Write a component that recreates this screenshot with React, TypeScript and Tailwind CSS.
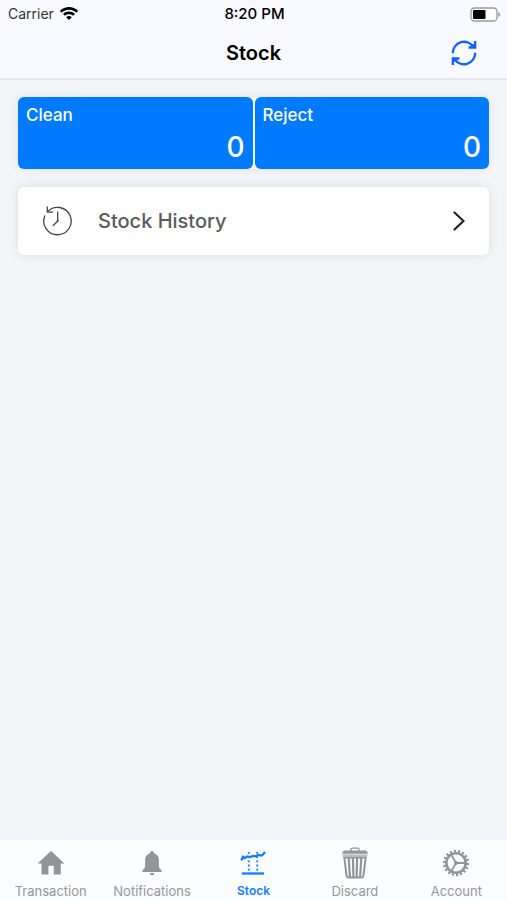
import type { ReactNode } from 'react';

const WifiIcon = () => (
  <svg className="h-[14px] w-[18px]" viewBox="0 0 18 14" fill="currentColor" aria-hidden="true">
    <path d="M9 0C5.600 0 2.500 1.300.200 3.500c-.2.200-.2.500 0 .7l1.200 1.200c.2.200.4.200.6 0C3.900 3.700 6.300 2.700 9 2.700s5.100 1 7 2.700c.2.200.4.200.6 0l1.200-1.200c.2-.2.2-.5 0-.7C15.500 1.300 12.400 0 9 0z" />
    <path d="M9 4.500c-2.200 0-4.200.8-5.700 2.200-.2.200-.2.400 0 .6l1.300 1.300c.2.200.4.200.6 0C6.200 7.700 7.500 7.200 9 7.200s2.800.5 3.800 1.400c.2.200.4.200.6 0l1.300-1.300c.2-.2.200-.4 0-.6C13.200 5.300 11.200 4.500 9 4.500z" />
    <path d="M9 9c-1 0-1.900.4-2.500 1-.2.200-.2.400 0 .6l2.200 2.200c.2.200.4.200.6 0l2.200-2.200c.2-.2.200-.4 0-.6C10.900 9.400 10 9 9 9z" />
  </svg>
);

const BatteryIcon = () => (
  <svg className="h-[15px] w-[31px]" viewBox="0 0 31 15" aria-hidden="true">
    <rect x="1" y="1" width="26" height="13" rx="3.500" fill="#fff" stroke="#9b9b9b" strokeWidth="1.300" />
    <rect x="3" y="3" width="12.500" height="9" rx="1" fill="#000" />
    <path d="M28.300 5v5c1-.5 1.900-1.400 1.900-2.500S29.300 5.500 28.300 5z" fill="#9b9b9b" />
  </svg>
);

const SyncIcon = () => (
  <svg className="h-[26px] w-[26px]" viewBox="0 0 26 26" fill="none" stroke="currentColor" strokeWidth="2.300" aria-hidden="true">
    <path d="M1.800 13.200A11.200 11.200 0 0 1 22.600 7.200" />
    <path d="M24.200 1V7.500H17.600M20 7.500 24.200 4.500" />
    <path d="M24.200 12.800A11.200 11.200 0 0 1 3.400 18.800" />
    <path d="M1.800 25V18.500H8.400M6 18.500 1.800 21.500" />
  </svg>
);

const HistoryIcon = () => (
  <svg className="h-[30px] w-[30px]" viewBox="0 0 30 30" fill="none" stroke="currentColor" strokeWidth="1.300" aria-hidden="true">
    <path d="M5.400 5.750A13.700 13.700 0 1 1 2.900 9.600" />
    <path d="M5.300.5v5.600h5.700" />
    <path d="M15.700 5.500v9.700l-4.800 4.500" />
    <circle cx="15.600" cy="15" r="1" fill="currentColor" stroke="none" />
  </svg>
);

const ChevronIcon = () => (
  <svg className="h-5 w-3" viewBox="0 0 12 20" fill="none" stroke="currentColor" strokeWidth="2.200" strokeLinecap="round" aria-hidden="true">
    <path d="M1.500 1.500 10.500 10l-9 8.500" />
  </svg>
);

const HomeIcon = () => (
  <svg className="h-8 w-8" viewBox="0 0 32 32" fill="currentColor" aria-hidden="true">
    <path d="M16 4 29.500 16.400H25.800V27.500H18.800V19.500c0-.4-.3-.7-.7-.7H14.100c-.4 0-.7.300-.7.700V27.500H6.500V16.400H2.500z" />
  </svg>
);

const BellIcon = () => (
  <svg className="h-8 w-8" viewBox="0 0 32 32" fill="currentColor" aria-hidden="true">
    <path d="M16 4c-1.100 0-1.900.8-1.900 1.700v.5C10.900 7 9.100 9.700 9.100 13v5.500c0 2.200-.8 3.300-2.700 4.700V25h19.200v-1.800c-1.900-1.400-2.700-2.500-2.700-4.700V13c0-3.300-1.800-6-5-6.800v-.5C17.900 4.800 17.100 4 16 4z" />
    <path d="M13.700 26h4.600c-.2 1.400-1 2.300-2.300 2.300s-2.100-.9-2.300-2.300z" />
  </svg>
);

const StockIcon = () => (
  <svg className="h-8 w-8" viewBox="0 0 32 32" fill="none" stroke="currentColor" strokeWidth="2.300" aria-hidden="true">
    <path d="M4.300 13.500 6 9.800l1.800 1.300 2.300-1.600 3 .6 3-1.200 2.700.4 2.700-1.300 2.700.6 1.700-.9L28 5" />
    <path d="M11.800 5v20M20.200 5v20" strokeDasharray="1.800 2.400" strokeWidth="1.800" />
    <path d="M4.900 26.500H27.100" />
  </svg>
);

const TrashIcon = () => (
  <svg className="h-8 w-8" viewBox="0 0 32 32" fill="none" stroke="currentColor" aria-hidden="true">
    <path d="M12 4V2.500c0-.8.500-1.300 1.300-1.300h5.400c.8 0 1.300.5 1.300 1.300V4" strokeWidth="1.300" />
    <path d="M6 3.600h20c1.700 0 2.800 1.300 2.800 3.200H3.200C3.200 4.900 4.300 3.600 6 3.600z" fill="currentColor" stroke="none" />
    <path d="M3.500 8.400h25" strokeWidth="2" opacity=".6" />
    <path d="M5.300 10.500 7.600 29c.1.900.7 1.400 1.600 1.400h13.600c.9 0 1.500-.5 1.600-1.400l2.300-18.500z" strokeWidth="2" />
    <path d="M9.700 11l1.200 19M13.900 11l.5 19M18.100 11l-.5 19M22.300 11l-1.200 19" strokeWidth="2.200" />
  </svg>
);

const GearIcon = () => (
  <svg className="h-8 w-8" viewBox="0 0 32 32" fill="none" stroke="currentColor" aria-hidden="true">
    <circle cx="16" cy="16" r="9.700" strokeWidth="2.600" />
    <circle cx="16" cy="16" r="11.900" strokeWidth="2.500" pathLength="36" strokeDasharray="1 1" />
    <path d="M16 16h9M16 16l-4.700-8.200M16 16l-4.700 8.200" strokeWidth="1.800" />
    <circle cx="16" cy="16" r="1.900" fill="currentColor" stroke="none" />
  </svg>
);

const tabs: { label: string; icon: ReactNode }[] = [
  { label: 'Transaction', icon: <HomeIcon /> },
  { label: 'Notifications', icon: <BellIcon /> },
  { label: 'Stock', icon: <StockIcon /> },
  { label: 'Discard', icon: <TrashIcon /> },
  { label: 'Account', icon: <GearIcon /> },
];

const stocks = [
  { label: 'Clean', count: 0 },
  { label: 'Reject', count: 0 },
];

const App = () => {
  return (
    <div className="flex min-h-screen flex-col bg-[#f3f5f8] font-['Inter','Liberation_Sans',sans-serif] text-black">
      <header className="border-b-2 border-[#e4e6e9] bg-[#f8faff]">
        <div className="grid h-7 grid-cols-3 items-center pr-1.5 pl-2 text-[14px] leading-5">
          <div className="flex items-center gap-1.5 text-[#333]">
            <span>Carrier</span>
            <span className="text-black">
              <WifiIcon />
            </span>
          </div>
          <span className="text-center text-[15px] font-medium">8:20 PM</span>
          <div className="flex justify-end">
            <BatteryIcon />
          </div>
        </div>
        <div className="grid h-[50px] grid-cols-3 items-center px-[30px]">
          <h1 className="col-start-2 text-center text-[20px] leading-6 font-semibold">Stock</h1>
          <button type="button" aria-label="Refresh" className="justify-self-end text-[#0f62fe]">
            <SyncIcon />
          </button>
        </div>
      </header>

      <main className="flex flex-1 flex-col gap-[18px] px-[18px] pt-[17px]">
        <div className="grid grid-cols-2 gap-0.5 rounded-md shadow-[0_0_12px_rgba(0,0,0,0.08)]">
          {stocks.map((stock) => (
            <section key={stock.label} className="flex h-[72px] flex-col justify-between rounded-md bg-[#007aff] px-2 pt-1.5 pb-1 text-white">
              <h2 className="text-[17px] leading-6 font-medium">{stock.label}</h2>
              <p className="text-right text-[28px] leading-9 font-medium">{stock.count}</p>
            </section>
          ))}
        </div>

        <button type="button" className="flex h-[68px] items-center rounded-md bg-white px-6 text-left shadow-[0_0_12px_rgba(0,0,0,0.1)]">
          <span className="text-[#444]">
            <HistoryIcon />
          </span>
          <span className="ml-[26px] flex-1 text-[20px] leading-6 font-medium text-[#5a5a5a]">Stock History</span>
          <span className="text-[#222]">
            <ChevronIcon />
          </span>
        </button>
      </main>

      <nav className="grid h-[60px] grid-cols-5 bg-[#fafcfe]">
        {tabs.map((tab) => (
          <a
            key={tab.label}
            href="#"
            aria-current={tab.label === 'Stock' ? 'page' : undefined}
            className="flex flex-col items-center gap-1 pt-[7px] text-[#929497] aria-[current=page]:text-[#0f7fff]"
          >
            {tab.icon}
            <span className={tab.label === 'Stock' ? 'text-[12px] leading-4 font-semibold' : 'text-[13px] leading-4 text-[#96989c]'}>
              {tab.label}
            </span>
          </a>
        ))}
      </nav>
    </div>
  );
};

export default App;
